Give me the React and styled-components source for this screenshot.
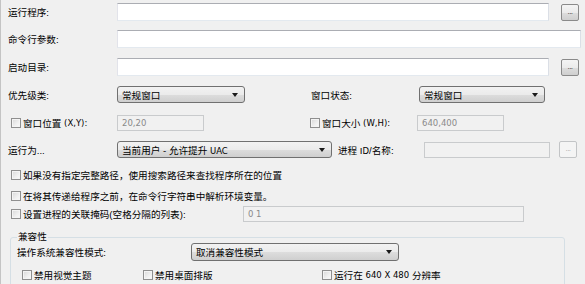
import React from 'react';
import styled, { createGlobalStyle } from 'styled-components';

const Global = createGlobalStyle`
  html, body { margin: 0; padding: 0; background: #f0f0f0; }
  body { font-family: "Liberation Sans", "Noto Sans CJK SC", sans-serif; }
  * { box-sizing: border-box; }
`;

const Page = styled.div`
  width: 585px;
  height: 284px;
  overflow: hidden;
  border-left: 1px solid #c4c4c4;
  padding: 3px 0 0 7px;
  display: flex;
  flex-direction: column;
  font-size: 9.6px;
  color: #000;
  background: #f0f0f0;
`;

const Row = styled.div`
  display: flex;
  align-items: center;
  height: ${p => p.$h || 18}px;
  margin-top: ${p => p.$mt || 0}px;
  flex: none;
`;

const Label = styled.div`
  width: ${p => p.$w}px;
  flex: none;
  white-space: nowrap;
  margin-left: ${p => p.$ml || 0}px;
`;

const Input = styled.div`
  width: ${p => p.$w}px;
  height: ${p => p.$h || 18}px;
  margin-left: ${p => p.$ml || 0}px;
  flex: none;
  background: #fff;
  border: 1px solid;
  border-color: #abadb3 #dbdfe6 #e3e9ef #e2e3ea;
`;

const DisabledInput = styled.div`
  width: ${p => p.$w}px;
  height: 16px;
  margin-left: ${p => p.$ml || 0}px;
  flex: none;
  background: #f1f1f1;
  border: 1px solid #c9cbcd;
  color: #8a8a8a;
  padding-left: 4px;
  display: flex;
  align-items: center;
  font-family: "DejaVu Sans", sans-serif;
  font-size: 8.5px;
`;

const DotsButton = styled.div`
  width: 18px;
  height: 17px;
  margin-left: ${p => p.$ml || 0}px;
  flex: none;
  border: 1px solid ${p => (p.$disabled ? '#c2c4c6' : '#8a8a8a')};
  border-radius: 2px;
  background: ${p =>
    p.$disabled
      ? '#f4f4f4'
      : 'linear-gradient(#f4f4f4 0%, #ebebeb 50%, #dddddd 51%, #cfcfcf 100%)'};
  color: ${p => (p.$disabled ? '#a8a8a8' : '#333')};
  font-size: 8px;
  display: flex;
  align-items: center;
  justify-content: center;
  line-height: 1;
  padding-bottom: 1px;
  letter-spacing: -0.5px;
`;

const Select = styled.div`
  width: ${p => p.$w}px;
  height: ${p => p.$h || 17}px;
  margin-left: ${p => p.$ml || 0}px;
  flex: none;
  border: 1px solid #707070;
  border-radius: 3px;
  background: linear-gradient(#f2f2f2 0%, #ebebeb 50%, #dddddd 51%, #cfcfcf 100%);
  display: flex;
  align-items: center;
  justify-content: space-between;
  padding: 0 6px 0 4px;
  color: #000;
  white-space: nowrap;
`;

const Arrow = styled.span`
  width: 0;
  height: 0;
  border-left: 3px solid transparent;
  border-right: 3px solid transparent;
  border-top: 4px solid #1a1a1a;
`;

const Check = styled.span`
  width: 10px;
  height: 10px;
  flex: none;
  border: 1px solid #8f8f8f;
  background: linear-gradient(135deg, #d8d8d8 0%, #f0f0f0 60%, #fbfbfb 100%);
  box-shadow: inset 0 0 0 1px #f4f4f4;
  margin-left: ${p => p.$ml || 0}px;
  margin-right: 2px;
`;

const CheckLabel = styled.div`
  display: flex;
  align-items: center;
  flex: none;
  width: ${p => (p.$w ? `${p.$w}px` : 'auto')};
  margin-left: ${p => p.$ml || 0}px;
  white-space: nowrap;
`;

const Small = styled.span`
  font-size: 8.5px;
  font-family: "DejaVu Sans", sans-serif;
`;

const Group = styled.fieldset`
  margin: 9px 0 0 2px;
  width: 555px;
  height: 60px;
  border: 1px solid #d5dfe5;
  border-radius: 3px;
  padding: 0 0 0 6px;
  display: flex;
  flex-direction: column;
  flex: none;
`;

const Legend = styled.legend`
  padding: 0 1px;
  margin-left: 0;
  font-size: 9.6px;
  line-height: 12px;
`;

export default function App() {
  return (
    <>
      <Global />
      <Page>
        <Row>
          <Label $w={109}>运行程序:</Label>
          <Input $w={432} />
          <DotsButton $ml={12}>...</DotsButton>
        </Row>
        <Row $mt={9}>
          <Label $w={109}>命令行参数:</Label>
          <Input $w={464} />
        </Row>
        <Row $mt={10}>
          <Label $w={109}>启动目录:</Label>
          <Input $w={432} />
          <DotsButton $ml={12}>...</DotsButton>
        </Row>
        <Row $mt={10} $h={17}>
          <Label $w={109}>优先级类:</Label>
          <Select $w={128}>
            常规窗口
            <Arrow />
          </Select>
          <Label $w={108} $ml={66}>窗口状态:</Label>
          <Select $w={126}>
            常规窗口
            <Arrow />
          </Select>
        </Row>
        <Row $mt={12} $h={16}>
          <CheckLabel $w={109}>
            <Check $ml={3} />
            窗口位置 <Small>&nbsp;(X,Y):</Small>
          </CheckLabel>
          <DisabledInput $w={87}>20,20</DisabledInput>
          <CheckLabel $w={107} $ml={106}>
            <Check />
            窗口大小 <Small>&nbsp;(W,H):</Small>
          </CheckLabel>
          <DisabledInput $w={87}>640,400</DisabledInput>
        </Row>
        <Row $mt={10} $h={17}>
          <Label $w={109}>运行为...</Label>
          <Select $w={215}>
            <span>
              当前用户 - 允许提升 <Small>UAC</Small>
            </span>
            <Arrow />
          </Select>
          <Label $w={86} $ml={6}>
            进程 I<Small>D</Small>/名称:
          </Label>
          <DisabledInput $w={126} />
          <DotsButton $ml={9} $disabled>
            ...
          </DotsButton>
        </Row>
        <Row $mt={9} $h={16}>
          <CheckLabel>
            <Check $ml={3} />
            如果没有指定完整路径，使用搜索路径来查找程序所在的位置
          </CheckLabel>
        </Row>
        <Row $mt={5} $h={16}>
          <CheckLabel>
            <Check $ml={3} />
            在将其传递给程序之前，在命令行字符串中解析环境变量。
          </CheckLabel>
        </Row>
        <Row $mt={2} $h={16}>
          <CheckLabel $w={235}>
            <Check $ml={3} />
            设置进程的关联掩码(空格分隔的列表):
          </CheckLabel>
          <DisabledInput $w={281}>0 1</DisabledInput>
        </Row>
        <Group>
          <Legend>兼容性</Legend>
          <Row $h={18}>
            <Label $w={174}>操作系统兼容性模式:</Label>
            <Select $w={208} $h={18}>
              取消兼容性模式
              <Arrow />
            </Select>
          </Row>
          <Row $mt={7} $h={14}>
            <CheckLabel $w={126}>
              <Check $ml={5} />
              禁用视觉主题
            </CheckLabel>
            <CheckLabel $w={179}>
              <Check />
              禁用桌面排版
            </CheckLabel>
            <CheckLabel>
              <Check />
              运行在 <Small>&nbsp;640 X 480&nbsp;</Small> 分辨率
            </CheckLabel>
          </Row>
        </Group>
      </Page>
    </>
  );
}
